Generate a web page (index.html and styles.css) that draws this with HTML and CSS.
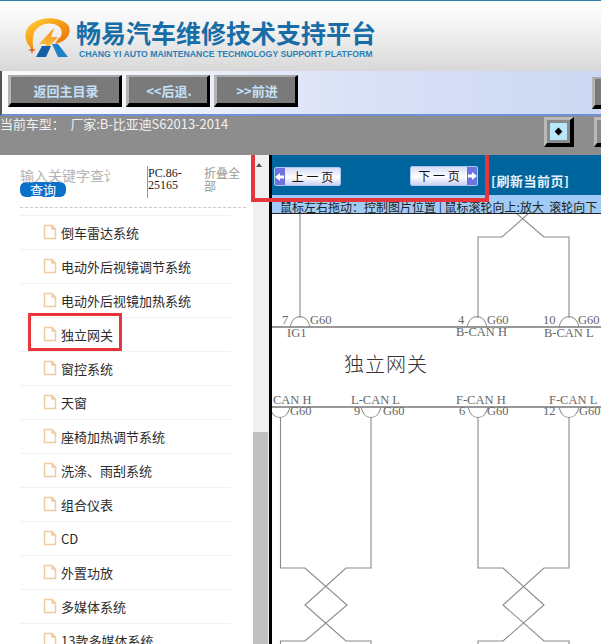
FILE: index.html
```html
<!DOCTYPE html>
<html lang="zh">
<head>
<meta charset="utf-8">
<title>畅易汽车维修技术支持平台</title>
<link rel="stylesheet" href="styles.css">
</head>
<body>
<div class="page">
  <header class="header">
    <svg class="logo" viewBox="0 0 48 42" width="48" height="42">
      <defs>
        <linearGradient id="og" x1="0" y1="0" x2="1" y2="1">
          <stop offset="0" stop-color="#ffd23a"/>
          <stop offset="0.5" stop-color="#f59a14"/>
          <stop offset="1" stop-color="#e8620f"/>
        </linearGradient>
        <linearGradient id="yl" x1="0" y1="0" x2="0" y2="1">
          <stop offset="0" stop-color="#f58a12"/>
          <stop offset="1" stop-color="#ffd24a"/>
        </linearGradient>
      </defs>
      <path d="M8 33C-2 25-2 12 8 6 18-1 36 0 43 8 47 14 44 24 30 27L33 22C38 19 38 12 33 9 25 4 13 7 9 16 7 22 8 28 8 33Z" fill="url(#og)"/>
      <path d="M29 11 14 27H21L18 36 33 20H26Z" fill="url(#yl)"/>
      <path d="M7 29 8 32 11 33 8 34 7 37 6 34 3 33 6 32Z" fill="#e8620f"/>
      <path d="M11 40 17 29H26L21 40Z" fill="#155fa6"/>
      <path d="M27 27H33L43 40H33Z" fill="#1f82c8"/>
    </svg>
    <div class="brand">
      <div class="brand-cn">畅易汽车维修技术支持平台</div>
      <div class="brand-en">CHANG YI AUTO MAINTENANCE TECHNOLOGY SUPPORT PLATFORM</div>
    </div>
  </header>

  <nav class="toolbar">
    <button class="bevel w-main">返回主目录</button>
    <button class="bevel w-nav">&lt;&lt;后退.</button>
    <button class="bevel w-nav">&gt;&gt;前进</button>
    <button class="bevel w-end">主</button>
  </nav>

  <div class="status">
    <span class="status-text">当前车型：  厂家:B-比亚迪S62013-2014</span>
    <button class="mini"><span class="mini-face"><span class="diamond"></span></span></button>
    <button class="mini mini-last"><span class="mini-face"></span></button>
  </div>

  <main class="main">
    <aside class="sidebar">
      <div class="search">
        <div class="query">
          <div class="placeholder">输入关键字查询</div>
          <div class="query-btn">查询</div>
        </div>
        <div class="pc">PC.86-25165</div>
        <div class="fold">折叠全部</div>
      </div>
      <div class="dash"></div>
      <ul class="tree">
        <li><svg class="doc" viewBox="0 0 14 16"><path d="M1.500 1.500H9L12.500 5V14.500H1.500Z M9 1.500V5H12.500"/></svg>倒车雷达系统</li>
        <li><svg class="doc" viewBox="0 0 14 16"><path d="M1.500 1.500H9L12.500 5V14.500H1.500Z M9 1.500V5H12.500"/></svg>电动外后视镜调节系统</li>
        <li><svg class="doc" viewBox="0 0 14 16"><path d="M1.500 1.500H9L12.500 5V14.500H1.500Z M9 1.500V5H12.500"/></svg>电动外后视镜加热系统</li>
        <li><svg class="doc" viewBox="0 0 14 16"><path d="M1.500 1.500H9L12.500 5V14.500H1.500Z M9 1.500V5H12.500"/></svg>独立网关</li>
        <li><svg class="doc" viewBox="0 0 14 16"><path d="M1.500 1.500H9L12.500 5V14.500H1.500Z M9 1.500V5H12.500"/></svg>窗控系统</li>
        <li><svg class="doc" viewBox="0 0 14 16"><path d="M1.500 1.500H9L12.500 5V14.500H1.500Z M9 1.500V5H12.500"/></svg>天窗</li>
        <li><svg class="doc" viewBox="0 0 14 16"><path d="M1.500 1.500H9L12.500 5V14.500H1.500Z M9 1.500V5H12.500"/></svg>座椅加热调节系统</li>
        <li><svg class="doc" viewBox="0 0 14 16"><path d="M1.500 1.500H9L12.500 5V14.500H1.500Z M9 1.500V5H12.500"/></svg>洗涤、雨刮系统</li>
        <li><svg class="doc" viewBox="0 0 14 16"><path d="M1.500 1.500H9L12.500 5V14.500H1.500Z M9 1.500V5H12.500"/></svg>组合仪表</li>
        <li><svg class="doc" viewBox="0 0 14 16"><path d="M1.500 1.500H9L12.500 5V14.500H1.500Z M9 1.500V5H12.500"/></svg>CD</li>
        <li><svg class="doc" viewBox="0 0 14 16"><path d="M1.500 1.500H9L12.500 5V14.500H1.500Z M9 1.500V5H12.500"/></svg>外置功放</li>
        <li><svg class="doc" viewBox="0 0 14 16"><path d="M1.500 1.500H9L12.500 5V14.500H1.500Z M9 1.500V5H12.500"/></svg>多媒体系统</li>
        <li><svg class="doc" viewBox="0 0 14 16"><path d="M1.500 1.500H9L12.500 5V14.500H1.500Z M9 1.500V5H12.500"/></svg>13款多媒体系统</li>
      </ul>
    </aside>

    <div class="scrollbar">
      <span class="scroll-up"></span>
      <span class="scroll-thumb"></span>
    </div>
    <div class="divider"></div>

    <section class="viewer">
      <div class="pagebar">
        <button class="pg pg-prev"><span class="pg-arrow"><svg viewBox="0 0 10 10" width="10" height="10"><path d="M0 5 5 1V3.500H9V6.500H5V9Z"/></svg></span><span class="pg-label">上 一 页</span></button>
        <button class="pg pg-next"><span class="pg-label">下 一 页</span><span class="pg-arrow"><svg viewBox="0 0 10 10" width="10" height="10"><path d="M10 5 5 1V3.500H1V6.500H5V9Z"/></svg></span></button>
        <span class="refresh">[刷新当前页]</span>
      </div>
      <div class="hint">鼠标左右拖动：控制图片位置 | 鼠标滚轮向上:放大&nbsp;&nbsp;滚轮向下</div>
      <svg class="diagram" viewBox="272 214 329 430" width="329" height="430">
        <g class="wire">
          <path d="M300 214V318"/>
          <path class="bus" d="M272 327H601"/>
          <path class="bus" d="M272 407H601"/>
          <path d="M290 327C293 313 307 313 310 327"/>
          <path d="M467 327C470 313 484 313 487 327"/>
          <path d="M559 327C562 313 576 313 579 327"/>
          <path d="M478 318V237H502L529 213"/>
          <path d="M569 318V237H544L516 213"/>
          <path d="M270 407C273 421 287 421 290 407"/>
          <path d="M361 407C364 421 378 421 381 407"/>
          <path d="M468 407C471 421 485 421 488 407"/>
          <path d="M559 407C562 421 576 421 579 407"/>
          <path d="M280.500 417V568H305L347 605 305 641H280.500V644"/>
          <path d="M371 417V568H346L305 605 346 641H371V644"/>
          <path d="M478 417V568H503L544 605 503 641H478V644"/>
          <path d="M569 417V568H544L503 605 544 641H569V644"/>
        </g>
        <g class="lbl">
          <text x="282" y="324">7</text><text x="310" y="324">G60</text>
          <text x="287" y="337">IG1</text>
          <text x="458" y="324">4</text><text x="487" y="324">G60</text>
          <text x="456" y="336">B-CAN H</text>
          <text x="543" y="324">10</text><text x="578" y="324">G60</text>
          <text x="544" y="337">B-CAN L</text>
          <text x="273" y="404">CAN H</text><text x="290" y="415">G60</text>
          <text x="351" y="404">L-CAN L</text>
          <text x="354" y="415">9</text><text x="383" y="415">G60</text>
          <text x="456" y="404">F-CAN H</text>
          <text x="459" y="415">6</text><text x="487" y="415">G60</text>
          <text x="549" y="404">F-CAN L</text>
          <text x="543" y="415">12</text><text x="579" y="415">G60</text>
        </g>
        <text class="dg-title" x="344" y="372">独立网关</text>
      </svg>
    </section>

    <div class="mark mark-page"></div>
    <div class="mark mark-item"></div>
  </main>
</div>
</body>
</html>
```
FILE: styles.css
```css
* { box-sizing: border-box; }
html, body { margin: 0; padding: 0; background: #fff; }
body { font-family: "Noto Sans CJK SC", "Liberation Sans", sans-serif; }
button { font-family: inherit; margin: 0; padding: 0; }
.page { width: 601px; height: 644px; overflow: hidden; display: flex; flex-direction: column; }

.header {
  height: 71px; flex: none;
  border-top: 1px solid #2f7fa8;
  background: linear-gradient(#ffffff 0%, #f6f6f6 30%, #d8d8d8 100%);
  display: flex; align-items: flex-start;
  padding: 16px 0 0 25px;
}
.logo { flex: none; display: block; }
.brand { margin: 0 0 0 3px; }
.brand-cn {
  font-size: 25px; font-weight: 700; line-height: 30px; color: #186da6;
  white-space: nowrap; margin-top: 0;
}
.brand-en {
  font-family: "Liberation Sans", sans-serif; font-size: 8.7px; font-weight: 700;
  color: #2a7fb6; line-height: 12px; margin: 1px 0 0 3px; white-space: nowrap;
}

.toolbar {
  height: 45px; flex: none;
  display: flex; align-items: flex-start; gap: 4px;
  padding: 4px 0 0 6px;
  overflow: hidden;
  border-left: 2px solid #555;
  border-bottom: 2px solid #6f90d2;
  background: linear-gradient(90deg, #fafbfd 0%, #f0f3fa 25%, #d9e1f6 60%, #ccd8f2 100%);
}
.bevel {
  flex: none; height: 32px;
  background: #7a7a7a;
  border-style: solid; border-width: 2px 3px 4px 3px;
  border-color: #a8a8a8 #000 #000 #b4b4b4;
  color: #c4e0f8; font-size: 13px; font-weight: 700;
  padding-left: 2px;
}
.w-main { width: 114px; }
.w-nav { width: 84px; }
.w-end { width: 40px; margin: 2px 0 0 290px; color: #ddd; }

.status {
  height: 39px; flex: none;
  background: #8d8d8d;
  display: flex; align-items: flex-start;
}
.status-text {
  color: #f0f0f0; font-size: 13px; line-height: 16px; white-space: pre;
  letter-spacing: -0.06px;
  margin-right: auto;
}
.mini {
  flex: none; width: 30px; height: 30px; margin-top: 1px;
  background: #8a8a8a;
  border-style: solid; border-width: 3px 4px 4px 3px;
  border-color: #b9b9b9 #000 #000 #b9b9b9;
  display: flex; align-items: center; justify-content: center;
}
.mini-face { width: 17px; height: 17px; background: #b9e6fb; display: flex; align-items: center; justify-content: center; }
.diamond { width: 5px; height: 5px; background: #000; transform: rotate(45deg) scale(1.1); }
.mini-last { margin-left: 20px; margin-right: -23px; }
.mini-last .mini-face { background: #8a8a8a; }

.main { position: relative; flex: 1; min-height: 0; display: flex; overflow: hidden; }

.sidebar { width: 253px; flex: none; background: #fff; overflow: hidden; }
.search { display: flex; align-items: flex-start; padding: 11px 0 0 20px; height: 42px; }
.query { width: 127px; flex: none; }
.placeholder {
  width: 90px; overflow: hidden; white-space: nowrap;
  font-size: 14px; line-height: 19px; color: #b4b4b4; margin-bottom: -3px;
}
.query-btn {
  width: 46px; height: 15px; border-radius: 6px; background: #0b70c9;
  color: #fff; font-size: 13px; line-height: 15px; text-align: center;
}
.pc {
  width: 57px; flex: none; height: 32px;
  border-left: 1px solid #999;
  font-family: "Liberation Serif", serif; font-size: 12px; line-height: 12px;
  color: #222; padding-top: 1px;
}
.fold { width: 38px; flex: none; font-size: 12px; line-height: 13px; color: #999; }
.dash { margin: 10px 7px 0 20px; border-top: 1px dashed #c9c9c9; height: 8px; }
.tree { list-style: none; margin: 0 22px 0 20px; padding: 0; }
.tree li {
  height: 34px; border-top: 1px solid #f1f1f1;
  display: flex; align-items: center;
  padding: 0 0 1px 23px; gap: 4px;
  font-size: 13px; color: #2b2b2b; white-space: nowrap;
  line-height: 1;
}
.doc { width: 14px; height: 16px; flex: none; fill: #fff; stroke: #f0cba0; stroke-width: 1.5; }

.scrollbar { width: 16px; flex: none; background: #f0f0f0; position: relative; }
.scroll-up {
  position: absolute; left: 3px; top: 8px; width: 0; height: 0;
  border-left: 3.500px solid transparent; border-right: 3.500px solid transparent; border-bottom: 4px solid #505050;
}
.scroll-thumb { position: absolute; left: 0; right: 1px; top: 277px; bottom: 0; background: #c0c0c0; }
.divider { width: 3px; flex: none; background: #000; }

.viewer { flex: 1; min-width: 0; display: flex; flex-direction: column; overflow: hidden; }
.pagebar {
  height: 40px; flex: none; background: #00659c;
  display: flex; align-items: flex-start;
}
.pg {
  flex: none; height: 20px; display: flex; align-items: stretch;
  background: linear-gradient(#d6dcf8, #ffffff 55%, #c9d0f2);
  border: 1px solid #a9c6ee; border-radius: 2px; overflow: hidden;
  color: #111; font-size: 12px;
}
.pg-prev { width: 67px; margin: 12px 0 0 2px; height: 19px; }
.pg-next { width: 68px; margin: 11px 0 0 69px; }
.pg-label { flex: 1; text-align: center; line-height: 18px; white-space: nowrap; font-family: "Noto Sans CJK SC", sans-serif; }
.pg-arrow { width: 10px; flex: none; background: #6d74e2; display: flex; align-items: center; justify-content: center; }
.pg-arrow svg { fill: #fff; }
.refresh { color: #e8f2fb; font-size: 13px; font-weight: 700; letter-spacing: 0.5px; margin: 17px 0 0 13px; line-height: 18px; white-space: nowrap; }
.hint {
  height: 19px; flex: none; background: #9fcbf6; border-bottom: 1px solid #222;
  padding-left: 8px; font-size: 12px; line-height: 24px; color: #222; white-space: nowrap; overflow: hidden;
}
.diagram { display: block; flex: none; background: #fff; }
.wire path { fill: none; stroke: #8a8a8a; stroke-width: 1.1; }
.wire .bus { stroke: #777; stroke-width: 1.4; }
.lbl text { font-family: "Liberation Serif", serif; font-size: 12.500px; fill: #666; }
.dg-title { font-family: "Noto Sans CJK SC", sans-serif; font-size: 20px; font-weight: 300; fill: #333; letter-spacing: 1px; }

.mark { position: absolute; pointer-events: none; border-style: solid; border-color: #e8353c; }
.mark-page { left: 251px; top: -4px; width: 238px; height: 51px; border-width: 4px; }
.mark-item { left: 28px; top: 158px; width: 94px; height: 38px; border-width: 3px; }
```
